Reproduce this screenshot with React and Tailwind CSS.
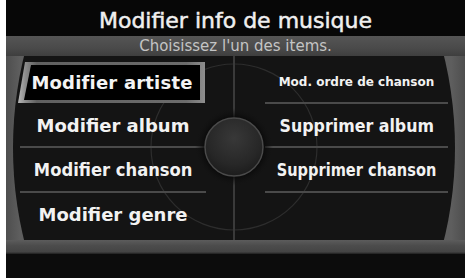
import React from "react";

const F = { fontFamily: '"DejaVu Sans", Verdana, sans-serif' };

function Line() {
  return <div className="h-[2px] w-full bg-[#4a4a4a]" />;
}

function LeftItem({ label, sx = "", line = true }) {
  return (
    <div className="ml-[7px] flex w-[186px] flex-col">
      <div className="flex flex-1 items-center justify-center">
        <span className={`whitespace-nowrap text-[18px] font-bold text-[#f2f2f2] ${sx}`}>{label}</span>
      </div>
      {line && <Line />}
    </div>
  );
}

function RightItem({ label, cls = "text-[18px]", sx = "", line = true }) {
  return (
    <div className="mr-[7px] ml-auto flex w-[183px] flex-col">
      <div className="flex flex-1 items-center justify-center">
        <span className={`whitespace-nowrap font-bold text-[#f2f2f2] ${cls} ${sx}`}>{label}</span>
      </div>
      {line && <Line />}
    </div>
  );
}

export default function App() {
  return (
    <div className="flex h-[278px] w-[465px] overflow-hidden bg-white" style={F}>
      <div className="w-[6px] shrink-0 bg-white" />
      <div className="flex flex-1 flex-col bg-black">
        {/* title */}
        <div className="flex h-[36px] items-center justify-center bg-[#070707] pt-[5px]">
          <span className="text-[22px] leading-none text-[#efefef] [-webkit-text-stroke:0.5px_#efefef]">
            Modifier info de musique
          </span>
        </div>
        {/* subtitle */}
        <div className="flex h-[20px] items-center justify-center bg-[linear-gradient(180deg,#555_0%,#4a4a4a_60%,#3e3e3e_100%)]">
          <span className="text-[15px] leading-none text-[#c4c4c4]">Choisissez l'un des items.</span>
        </div>
        {/* main */}
        <div className="flex h-[184px] bg-[linear-gradient(90deg,#4e4e4e_0%,#5e5e5e_3%,#5a5a5a_50%,#5e5e5e_97%,#4e4e4e_100%)]">
          <div className="relative ml-[7px] h-full w-[442px] bg-[#141414] [clip-path:ellipse(221px_295px_at_50%_50%)]">
            {/* decor */}
            <svg className="absolute inset-0" width="442" height="184">
              <circle cx="221" cy="91" r="83" fill="none" stroke="#2d2d2d" strokeWidth="1.2" />
              <rect x="220" y="0" width="2" height="184" fill="#3a3a3a" />
            </svg>
            <div className="relative flex h-full flex-col pt-[6px] pb-[4px]">
              <div className="flex h-[42px]">
                <div className="ml-[5px] flex w-[187px]">
                  <div className="h-[41px] w-full bg-[linear-gradient(90deg,#b8b8b8_0%,#8c8c8c_4%,#606060_10%,#6c6c6c_90%,#8e8e8e_100%)] py-[3px] pr-[5px] pl-[6px] [clip-path:polygon(7px_0,100%_0,100%_100%,0_100%)]">
                    <div className="flex h-full w-full items-center justify-center bg-black [clip-path:polygon(7px_0,100%_0,100%_100%,0_100%)]">
                      <span className="whitespace-nowrap text-[18px] font-bold text-[#f4f4f4] tracking-[0.2px]">Modifier artiste</span>
                    </div>
                  </div>
                </div>
                <RightItem label="Mod. ordre de chanson" cls="text-[12px]" />
              </div>
              <div className="flex h-[44px]">
                <LeftItem label="Modifier album" />
                <RightItem label="Supprimer album" sx="inline-block scale-x-[0.88]" />
              </div>
              <div className="flex h-[45px]">
                <LeftItem label="Modifier chanson" sx="inline-block scale-x-[0.91]" />
                <RightItem label="Supprimer chanson" sx="inline-block scale-x-[0.81]" />
              </div>
              <div className="flex h-[43px]">
                <LeftItem label="Modifier genre" line={false} />
              </div>
            </div>
            <svg className="absolute top-[51px] left-[181px]" width="80" height="80">
              <defs>
                <radialGradient id="sh2" cx="50%" cy="50%" r="50%">
                  <stop offset="70%" stopColor="#060606" stopOpacity="1" />
                  <stop offset="100%" stopColor="#141414" stopOpacity="0" />
                </radialGradient>
                <radialGradient id="kn2" cx="50%" cy="35%" r="65%">
                  <stop offset="0%" stopColor="#383838" />
                  <stop offset="70%" stopColor="#272727" />
                  <stop offset="100%" stopColor="#1c1c1c" />
                </radialGradient>
              </defs>
              <circle cx="40" cy="40" r="39" fill="url(#sh2)" />
              <circle cx="40" cy="40" r="29" fill="url(#kn2)" stroke="#4a4a4a" strokeWidth="1.5" />
            </svg>
          </div>
        </div>
        {/* bottom bar */}
        <div className="h-[14px] bg-[linear-gradient(180deg,#5c5c5c_0%,#4c4c4c_40%,#444_85%,#1e1e1e_100%)]" />
        <div className="flex-1 bg-[#0c0c0c]" />
      </div>
    </div>
  );
}
